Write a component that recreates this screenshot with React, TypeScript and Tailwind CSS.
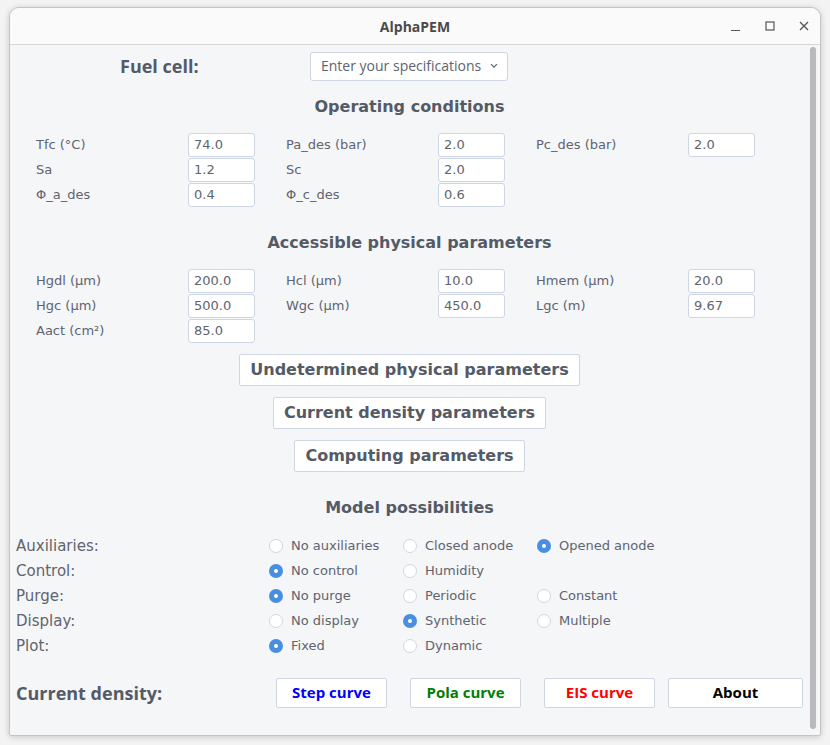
import React from "react";

const dv = "font-['DejaVu_Sans',sans-serif]";
const ub = "font-['Open_Sans','Liberation_Sans',sans-serif]";

type Field = [string, string] | null;

const operating: Field[][] = [
  [["Tfc (°C)", "74.0"], ["Pa_des (bar)", "2.0"], ["Pc_des (bar)", "2.0"]],
  [["Sa", "1.2"], ["Sc", "2.0"], null],
  [["Φ_a_des", "0.4"], ["Φ_c_des", "0.6"], null],
];

const physical: Field[][] = [
  [["Hgdl (µm)", "200.0"], ["Hcl (µm)", "10.0"], ["Hmem (µm)", "20.0"]],
  [["Hgc (µm)", "500.0"], ["Wgc (µm)", "450.0"], ["Lgc (m)", "9.67"]],
  [["Aact (cm²)", "85.0"], null, null],
];

const options: { label: string; items: string[]; checked: number }[] = [
  { label: "Auxiliaries:", items: ["No auxiliaries", "Closed anode", "Opened anode"], checked: 2 },
  { label: "Control:", items: ["No control", "Humidity"], checked: 0 },
  { label: "Purge:", items: ["No purge", "Periodic", "Constant"], checked: 0 },
  { label: "Display:", items: ["No display", "Synthetic", "Multiple"], checked: 1 },
  { label: "Plot:", items: ["Fixed", "Dynamic"], checked: 0 },
];

function SectionTitle({ children }: { children: React.ReactNode }) {
  return (
    <h2 className={`${dv} text-center text-[16px] leading-[20px] font-bold text-[#545a66]`}>
      {children}
    </h2>
  );
}

function ParamGrid({ rows }: { rows: Field[][] }) {
  return (
    <div className="flex flex-col gap-[1px] pl-[26px]">
      {rows.map((row, i) => (
        <div
          key={i}
          className="grid h-[24px] grid-cols-[152px_67px_31px_152px_67px_31px_152px_67px] items-center"
        >
          {row.map((f, j) => (
            <React.Fragment key={j}>
              <span className={`${dv} text-[13px] text-[#5e6470]`}>{f ? f[0] : ""}</span>
              {f ? (
                <div
                  className={`${dv} flex h-[24px] items-center rounded-[3px] border border-[#cfd6e3] bg-white pl-[5px] text-[13px] text-[#5e6470]`}
                >
                  {f[1]}
                </div>
              ) : (
                <span />
              )}
              {j < 2 && <span />}
            </React.Fragment>
          ))}
        </div>
      ))}
    </div>
  );
}

function Radio({ on }: { on: boolean }) {
  return on ? (
    <span className="flex h-[14px] w-[14px] items-center justify-center rounded-full bg-[#4a8fdf]">
      <span className="h-[4px] w-[4px] rounded-full bg-white" />
    </span>
  ) : (
    <span className="h-[14px] w-[14px] rounded-full border border-[#d2d6de] bg-white" />
  );
}

function BigButton({ children }: { children: React.ReactNode }) {
  return (
    <button
      className={`${dv} h-[32px] rounded-[2px] border border-[#cfd6e3] bg-white px-[10px] text-[16px] font-bold text-[#545a66]`}
    >
      {children}
    </button>
  );
}

function CurveButton({ children, color, w }: { children: React.ReactNode; color: string; w: string }) {
  return (
    <button
      className={`${ub} ${color} ${w} h-[30px] rounded-[2px] border border-[#cfd6e3] bg-white pb-[1px] text-[15px] font-bold`}
    >
      {children}
    </button>
  );
}

export default function App() {
  return (
    <div className="h-[745px] w-[830px] bg-[#f3f3f3] pl-[9px] pt-[7px]">
      <div className="flex h-[729px] w-[812px] flex-col overflow-hidden rounded-t-[10px] rounded-b-[2px] border border-[#c4c4c4] bg-[#f5f6f8] shadow-[0_1px_6px_rgba(0,0,0,0.18)]">
        {/* title bar */}
        <div className="relative flex h-[37px] shrink-0 items-center justify-center border-b border-[#d6d6d6] bg-[#fafafa]">
          <span className={`${ub} text-[14px] font-bold text-[#4a4a4a]`}>AlphaPEM</span>
          <div className="absolute right-[10px] top-0 flex h-full items-center gap-[22px] text-[#555]">
            <svg width="12" height="12" viewBox="0 0 12 12">
              <path d="M1 10.5h9" stroke="#555" strokeWidth="1.2" />
            </svg>
            <svg width="12" height="12" viewBox="0 0 12 12">
              <rect x="2" y="2" width="8" height="8" fill="none" stroke="#555" strokeWidth="1.2" />
            </svg>
            <svg width="12" height="12" viewBox="0 0 12 12">
              <path d="M2 2l8 8M10 2l-8 8" stroke="#555" strokeWidth="1.3" />
            </svg>
          </div>
        </div>

        <div className="flex min-h-0 flex-1">
          <main className="w-[799px] pt-[7px]">
            <div className="flex h-[29px] items-center">
              <span className={`${ub} ml-[110px] w-[190px] pb-[2px] text-[18px] leading-[22px] font-bold text-[#545a66]`}>
                Fuel cell:
              </span>
              <div
                className={`${ub} flex h-[29px] w-[198px] items-center justify-between rounded-[3px] border border-[#cfd6e3] bg-white pb-[2px] pl-[10px] pr-[9px] text-[14px] text-[#5e6470]`}
              >
                <span>Enter your specifications</span>
                <svg width="8" height="6" viewBox="0 0 8 6">
                  <path d="M1 1.2l3 3 3-3" fill="none" stroke="#5e6470" strokeWidth="1.2" />
                </svg>
              </div>
            </div>

            <div className="mt-[16px]">
              <SectionTitle>Operating conditions</SectionTitle>
            </div>
            <div className="mt-[16px]">
              <ParamGrid rows={operating} />
            </div>

            <div className="mt-[26px]">
              <SectionTitle>Accessible physical parameters</SectionTitle>
            </div>
            <div className="mt-[16px]">
              <ParamGrid rows={physical} />
            </div>

            <div className="mt-[11px] flex flex-col items-center gap-[11px]">
              <BigButton>Undetermined physical parameters</BigButton>
              <BigButton>Current density parameters</BigButton>
              <BigButton>Computing parameters</BigButton>
            </div>

            <div className="mt-[26px]">
              <SectionTitle>Model possibilities</SectionTitle>
            </div>

            <div className="mt-[15px] flex flex-col pl-[6px]">
              {options.map((o) => (
                <div key={o.label} className="grid h-[25px] grid-cols-[253px_134px_134px_134px] items-center">
                  <span className={`${dv} pt-[1px] text-[15px] text-[#5e6470]`}>{o.label}</span>
                  {o.items.map((it, i) => (
                    <div key={it} className="flex items-center gap-[8px]">
                      <Radio on={i === o.checked} />
                      <span className={`${dv} text-[13px] text-[#5e6470]`}>{it}</span>
                    </div>
                  ))}
                </div>
              ))}
            </div>

            <div className="mt-[20px] flex h-[30px] items-center pl-[6px]">
              <span className={`${ub} w-[260px] pb-[1px] text-[18px] leading-[22px] font-bold text-[#545a66]`}>
                Current density:
              </span>
              <div className="flex gap-[23px]">
                <CurveButton color="text-[#0000ff]" w="w-[111px]">Step curve</CurveButton>
                <CurveButton color="text-[#008000]" w="w-[111px]">Pola curve</CurveButton>
              </div>
              <div className="ml-[23px] flex gap-[13px]">
                <CurveButton color="text-[#ff0000]" w="w-[111px]">EIS curve</CurveButton>
                <CurveButton color="text-black" w="w-[135px]">About</CurveButton>
              </div>
            </div>
          </main>
          <div className="flex-1 pb-[6px] pl-[1px] pt-[2px]">
            <div className="h-full w-[6px] rounded-full bg-[#b9b9be]" />
          </div>
        </div>
      </div>
    </div>
  );
}
